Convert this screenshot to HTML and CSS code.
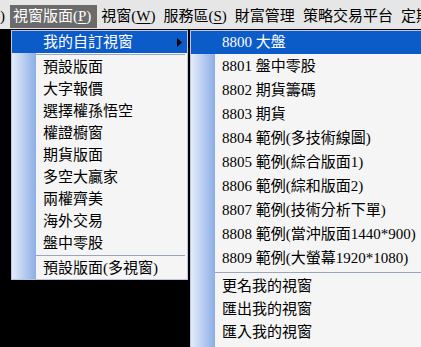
FILE: index.html
```html
<!DOCTYPE html>
<html lang="zh-Hant">
<head>
<meta charset="utf-8">
<title>視窗版面</title>
<link rel="stylesheet" href="styles.css">
</head>
<body>
<div class="menubar">
  <span class="mb-item mb-first">)</span>
  <span class="mb-item mb-active">視窗版面(<u>P</u>)</span>
  <span class="mb-item">視窗(<u>W</u>)</span>
  <span class="mb-item">服務區(<u>S</u>)</span>
  <span class="mb-item">財富管理</span>
  <span class="mb-item">策略交易平台</span>
  <span class="mb-item">定期定額</span>
</div>
<div class="dropdowns">
  <div class="menu menu-left">
    <div class="item item-hl">我的自訂視窗<svg class="arrow" width="5" height="9" viewBox="0 0 5 9"><path d="M0 0 L5 4.5 L0 9 Z" fill="#000"/></svg></div>
    <div class="sep"></div>
    <div class="item">預設版面</div>
    <div class="item">大字報價</div>
    <div class="item">選擇權孫悟空</div>
    <div class="item">權證櫥窗</div>
    <div class="item">期貨版面</div>
    <div class="item">多空大贏家</div>
    <div class="item">兩權齊美</div>
    <div class="item">海外交易</div>
    <div class="item">盤中零股</div>
    <div class="sep"></div>
    <div class="item">預設版面(多視窗)</div>
  </div>
  <div class="menu menu-right">
    <div class="item item-hl">8800 大盤</div>
    <div class="item tall">8801 盤中零股</div>
    <div class="item tall">8802 期貨籌碼</div>
    <div class="item tall">8803 期貨</div>
    <div class="item tall">8804 範例(多技術線圖)</div>
    <div class="item tall">8805 範例(綜合版面1)</div>
    <div class="item tall">8806 範例(綜和版面2)</div>
    <div class="item tall">8807 範例(技術分析下單)</div>
    <div class="item tall">8808 範例(當沖版面1440*900)</div>
    <div class="item tall">8809 範例(大螢幕1920*1080)</div>
    <div class="sep sep-r"></div>
    <div class="item mid">更名我的視窗</div>
    <div class="item mid">匯出我的視窗</div>
    <div class="item mid">匯入我的視窗</div>
  </div>
</div>
</body>
</html>
```
FILE: styles.css
```css
html, body {
  margin: 0;
  padding: 0;
  background: #000;
  overflow: hidden;
}
body {
  width: 421px;
  height: 347px;
  font-family: "Liberation Serif", "Noto Sans CJK TC", serif;
  font-size: 15px;
  color: #000;
}
.menubar {
  display: flex;
  height: 29px;
  padding-top: 5px;
  box-sizing: border-box;
  background: #e6e6e6;
  white-space: nowrap;
  overflow: hidden;
}
.mb-item {
  display: block;
  height: 23px;
  line-height: 23px;
  padding: 0 4px;
  flex: none;
}
.mb-first {
  padding: 0 5px 0 0;
}
.mb-active {
  background: #6b6b6b;
  color: #fff;
  padding: 0 6px 0 3px;
}
.mb-item u {
  text-decoration: underline;
  text-underline-offset: 2px;
}
.dropdowns {
  display: flex;
  align-items: flex-start;
  gap: 2px;
  padding: 1px 0 0 11px;
}
.menu {
  flex: none;
  border: 1px solid #b9c6de;
  box-sizing: border-box;
  background:
    linear-gradient(to right, #e4ecfa, #8caee6) 0 0 / 24px 100% no-repeat,
    #f5f5f5;
  white-space: nowrap;
}
.menu-left {
  width: 177px;
}
.menu-right {
  width: 260px;
  height: 320px;
  border-right: none;
}
.item {
  height: 22px;
  line-height: 22px;
  padding-left: 31px;
  position: relative;
}
.item-hl {
  background: #0b5bc8;
  color: #fff;
}
.menu-right .item-hl {
  height: 23px;
  line-height: 23px;
}
.item.tall {
  height: 24px;
  line-height: 24px;
}
.item.mid {
  height: 23px;
  line-height: 23px;
}
.arrow {
  position: absolute;
  right: 5px;
  top: 7px;
}
.sep {
  height: 3px;
  margin: 0 2px 0 24px;
  background: linear-gradient(#9aa6bb, #9aa6bb) 0 1px / 100% 1px no-repeat;
}
.sep-r {
  height: 5px;
  margin-right: 0;
  background-position: 0 2px;
}
```
